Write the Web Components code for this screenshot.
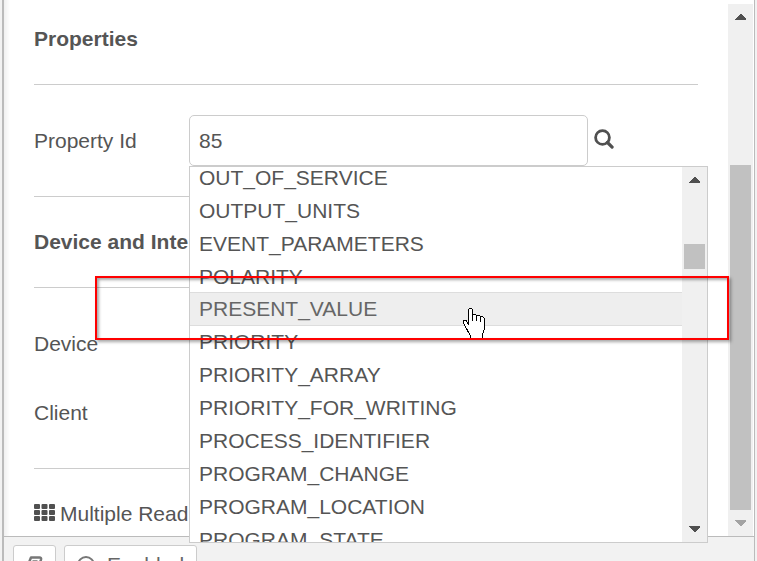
<!DOCTYPE html>
<html lang="en">
<head>
<meta charset="utf-8">
<title>Properties</title>
<style>
  body {
    margin: 0;
    height: 100vh;
    overflow: hidden;
    position: relative;
    background: #f2f2f2;
    color: #555;
    font: 21px/24px "Liberation Sans", Arial, sans-serif;
  }
</style>
</head>
<body>
<edit-panel>
  <form-section heading="Properties">
    <form-field label="Property Id" value="85">
      <option-list slot="menu">
        <option-item>OUT_OF_SERVICE</option-item>
        <option-item>OUTPUT_UNITS</option-item>
        <option-item>EVENT_PARAMETERS</option-item>
        <option-item>POLARITY</option-item>
        <option-item active>PRESENT_VALUE</option-item>
        <option-item>PRIORITY</option-item>
        <option-item>PRIORITY_ARRAY</option-item>
        <option-item>PRIORITY_FOR_WRITING</option-item>
        <option-item>PROCESS_IDENTIFIER</option-item>
        <option-item>PROGRAM_CHANGE</option-item>
        <option-item>PROGRAM_LOCATION</option-item>
        <option-item>PROGRAM_STATE</option-item>
      </option-list>
    </form-field>
  </form-section>
  <form-section heading="Device and Inte">
    <form-field label="Device"></form-field>
    <form-field label="Client"></form-field>
  </form-section>
  <grid-title>Multiple Read</grid-title>

  <tray-button slot="footer" label="Documentation">
    <svg width="17" height="18" viewBox="0 0 17 18" fill="none" stroke="#777" stroke-width="2.500" stroke-linejoin="round"><path d="M5 1.500h8.500q2 0 1.500 2l-3 10H2.500q-2 0-1.500-2z"/><path d="M6.500 5h5M5.500 8.500h5" stroke-width="1.500"/><path d="M1.500 14.500q0 2 2 2h9.500l3-11" stroke-width="1.500"/></svg>
  </tray-button>
  <tray-button slot="footer">
    <svg width="18" height="18" viewBox="0 0 18 18" fill="none" stroke="#777" stroke-width="2"><circle cx="9" cy="9" r="8"/></svg>
    Enabled
  </tray-button>
</edit-panel>
<callout-box></callout-box>
<hand-pointer></hand-pointer>

<script>
"use strict";

// Attaches an open shadow root filled from a template
function render(host, html) {
  const template = document.createElement('template');
  template.innerHTML = html;
  const shadow = host.attachShadow({ mode: 'open' });
  shadow.appendChild(template.content.cloneNode(true));
  return shadow;
}

class ScrollTrack extends HTMLElement {
  constructor() {
    super();
    render(this, `
      <style>
        :host {
          display: flex;
          flex-direction: column;
          flex: none;
          width: 25px;
          background: #f0f0f0;
        }
        svg { display: block; flex: none; margin: 10px 7px; fill: #505050; }
        .down { fill: var(--down, #505050); }
        .before { flex: var(--before, 0) 0 0px; }
        .thumb { flex: var(--thumb, 1) 0 0px; margin: 0 2px; background: #c1c1c1; }
        .after { flex: var(--after, 0) 0 0px; }
      </style>
      <svg width="11" height="6" shape-rendering="crispEdges"><path d="M5 0h1l5 5v1H0V5z"/></svg>
      <div class="before"></div>
      <div class="thumb"></div>
      <div class="after"></div>
      <svg class="down" width="11" height="6" shape-rendering="crispEdges"><path d="M0 0h11v1L6 6H5L0 1z"/></svg>
    `);
  }
}

class EditPanel extends HTMLElement {
  constructor() {
    super();
    render(this, `
      <style>
        :host {
          display: block;
          margin: 0 2px;
          border-left: 2px solid #bbb;
          border-right: 1px solid #bbb;
        }
        .body {
          display: flex;
          padding-right: 1px;
          background: linear-gradient(to right, #f0f0f0, #fff 6px);
          border-bottom: 1px solid #bbb;
        }
        .content { flex: 1; min-width: 0; padding: 27px 30px 10px; }
        scroll-track { margin-top: 4px; --before: 135; --thumb: 345; --down: #a3a3a3; }
        footer { display: flex; gap: 8px; padding: 8px 9px 0; }
      </style>
      <div class="body">
        <div class="content"><slot></slot></div>
        <scroll-track></scroll-track>
      </div>
      <footer><slot name="footer"></slot></footer>
    `);
  }
}

class FormSection extends HTMLElement {
  constructor() {
    super();
    const shadow = render(this, `
      <style>
        :host { display: block; }
        h2 { margin: 0; font-size: 21px; line-height: 24px; }
        hr { margin: 33px 0 30px; border: 0; border-top: 1px solid #ccc; }
        .fields { display: flex; flex-direction: column; gap: 18px; }
        hr.end { margin: 30px 0 33px; }
      </style>
      <h2></h2>
      <hr>
      <div class="fields"><slot></slot></div>
      <hr class="end">
    `);
    shadow.querySelector('h2').textContent = this.getAttribute('heading');
  }
}

class FormField extends HTMLElement {
  constructor() {
    super();
    const hasInput = this.hasAttribute('value');
    const shadow = render(this, `
      <style>
        :host { display: flex; align-items: center; height: 51px; }
        label, .label { flex: none; width: 155px; }
        .combo { position: relative; flex: 1; min-width: 0; }
        input {
          display: block;
          box-sizing: border-box;
          width: 100%;
          height: 51px;
          padding: 0 9px;
          border: 1px solid #ccc;
          border-radius: 5px;
          background: #fff;
          color: inherit;
          font: inherit;
          outline: none;
        }
        button {
          flex: none;
          margin: 0 84px 0 6px;
          padding: 0;
          border: 0;
          background: none;
        }
        svg { display: block; }
      </style>
      ${hasInput ? `
        <label for="field"></label>
        <div class="combo">
          <input id="field" type="text">
          <slot name="menu"></slot>
        </div>
        <button type="button" aria-label="Search">
          <svg width="20" height="23" viewBox="0 0 20 23" fill="none" stroke="#505050"><circle cx="8.500" cy="8.500" r="6.900" stroke-width="2.800"/><path d="M13.500 13.500l4.600 4.600" stroke-width="3.200" stroke-linecap="round"/></svg>
        </button>` : '<span class="label"></span>'}
    `);
    shadow.querySelector('label, .label').textContent = this.getAttribute('label');
    if (hasInput) {
      shadow.querySelector('input').value = this.getAttribute('value');
    }
  }
}

// Suggestions under the text box, scrolled part of a row down
class OptionList extends HTMLElement {
  constructor() {
    super();
    render(this, `
      <style>
        :host {
          position: absolute;
          top: 100%;
          left: 0;
          z-index: 1;
          box-sizing: border-box;
          display: flex;
          width: 130%;
          height: 377px;
          border: 1px solid #ccc;
          background: #fff;
          overflow: hidden;
        }
        .items { flex: 1; min-width: 0; margin-top: -6px; }
        scroll-track { --before: 51; --thumb: 25; --after: 247; }
      </style>
      <div class="items" role="listbox"><slot></slot></div>
      <scroll-track></scroll-track>
    `);
  }
}

class OptionItem extends HTMLElement {
  constructor() {
    super();
    this.attachShadow({ mode: 'open' }).innerHTML = `
      <style>
        :host { display: block; padding: 0 9px; line-height: 33px; }
        :host([active]) {
          margin: -1px 0;
          border: solid #ddd;
          border-width: 1px 0;
          background: #eee;
          color: #666;
          line-height: 32px;
          position: relative;
        }
      </style>
      <slot></slot>
    `;
  }

  connectedCallback() {
    this.setAttribute('role', 'option');
  }
}

class GridTitle extends HTMLElement {
  constructor() {
    super();
    render(this, `
      <style>
        :host { display: flex; align-items: center; gap: 5px; }
        svg { fill: #505050; }
      </style>
      <svg width="21" height="20" viewBox="0 0 21 20">
        <rect width="6" height="5" rx="1"/><rect x="7.500" width="6" height="5" rx="1"/><rect x="15" width="6" height="5" rx="1"/>
        <rect y="6" width="6" height="5" rx="1"/><rect x="7.500" y="6" width="6" height="5" rx="1"/><rect x="15" y="6" width="6" height="5" rx="1"/>
        <rect y="12" width="6" height="5" rx="1"/><rect x="7.500" y="12" width="6" height="5" rx="1"/><rect x="15" y="12" width="6" height="5" rx="1"/>
      </svg>
      <span><slot></slot></span>
    `);
  }
}

class TrayButton extends HTMLElement {
  constructor() {
    super();
    const shadow = render(this, `
      <style>
        :host { display: block; }
        button {
          display: flex;
          align-items: center;
          gap: 12px;
          height: 40px;
          padding: 0 12px;
          border: 1px solid #ccc;
          border-radius: 3px;
          background: #fff;
          color: #666;
          font: inherit;
        }
        ::slotted(svg) { display: block; }
      </style>
      <button type="button"><slot></slot></button>
    `);
    if (this.hasAttribute('label')) {
      shadow.querySelector('button').setAttribute('aria-label', this.getAttribute('label'));
    }
  }
}

// Red frame laid over the chosen option
class CalloutBox extends HTMLElement {
  constructor() {
    super();
    render(this, `
      <style>
        :host {
          position: absolute;
          z-index: 2;
          top: 276px;
          left: 95px;
          right: 28px;
          height: 60px;
          border: 2px solid #f00;
          box-shadow: 2px 2px 3px rgba(0,0,0,0.35), inset 2px 2px 3px rgba(0,0,0,0.35);
          pointer-events: none;
        }
      </style>
    `);
  }
}

class HandPointer extends HTMLElement {
  constructor() {
    super();
    render(this, `
      <style>
        :host { position: absolute; z-index: 3; top: 308px; left: 463px; pointer-events: none; }
        svg { display: block; }
      </style>
      <svg width="22" height="30" viewBox="0 0 22 30" shape-rendering="crispEdges" stroke="#000">
        <path fill="#fff" stroke="none" d="M7.500 30V28L.5 15v-2l1-.5h2l2 4.500V1.500l1-1h2l1 1v5h3l1 1h3l1 1h2l1.500 1.500.5 2v8l-2 7v3z"/>
        <path fill="none" d="M7.500 30V28L.5 15v-2l1-.5h2l2 4.500V1.500l1-1h2l1 1v5h3l1 1h3l1 1h2l1.500 1.500.5 2v8l-2 7v3M9.500 6v7M13.500 7v6M17.500 8v6"/>
      </svg>
    `);
  }
}

customElements.define('scroll-track', ScrollTrack);
customElements.define('edit-panel', EditPanel);
customElements.define('form-section', FormSection);
customElements.define('form-field', FormField);
customElements.define('option-list', OptionList);
customElements.define('option-item', OptionItem);
customElements.define('grid-title', GridTitle);
customElements.define('tray-button', TrayButton);
customElements.define('callout-box', CalloutBox);
customElements.define('hand-pointer', HandPointer);
</script>
</body>
</html>
